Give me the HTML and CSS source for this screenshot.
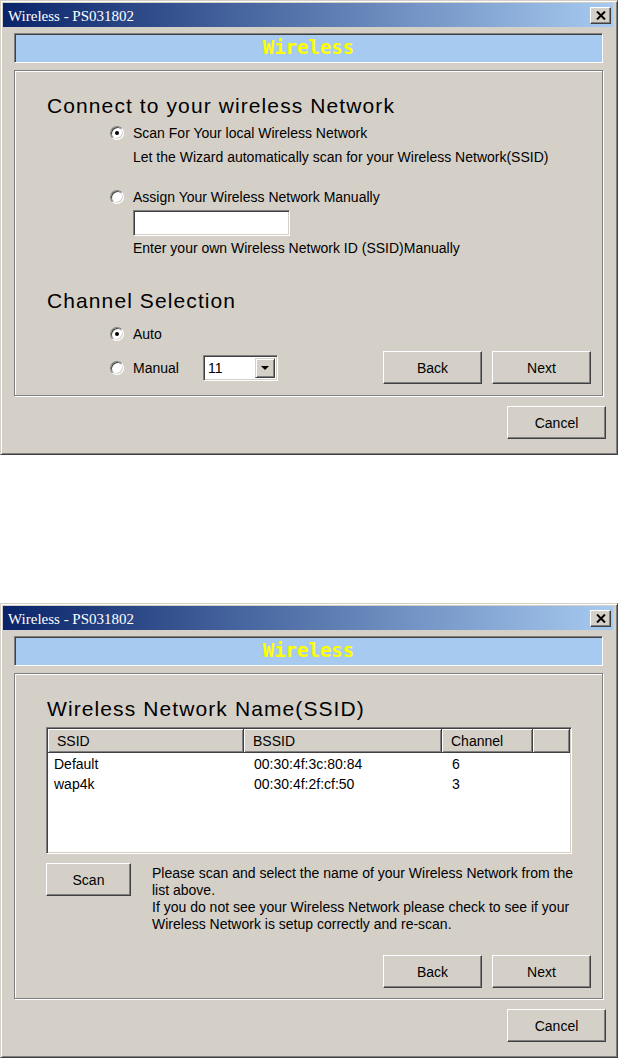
FILE: index.html
```html
<!DOCTYPE html>
<html>
<head>
<meta charset="utf-8">
<title>Wireless - PS031802</title>
<link rel="stylesheet" href="styles.css">
</head>
<body>
<div class="page">

  <div class="dialog">
    <div class="titlebar">
      <span class="title">Wireless - PS031802</span>
      <span class="close-btn"><svg width="10" height="9" viewBox="0 0 10 9"><path d="M1 0.5 L9 8.5 M9 0.5 L1 8.5" stroke="#000" stroke-width="2" fill="none"/></svg></span>
    </div>
    <div class="client">
      <div class="banner">Wireless</div>
      <div class="group">
        <h2 class="heading">Connect to your wireless Network</h2>
        <div class="options">
          <div class="radio-row first"><span class="radio checked"></span><span>Scan For Your local Wireless Network</span></div>
          <p class="hint">Let the Wizard automatically scan for your Wireless Network(SSID)</p>
          <div class="radio-row second"><span class="radio"></span><span>Assign Your Wireless Network Manually</span></div>
          <div class="textbox"></div>
          <p class="hint hint-tight">Enter your own Wireless Network ID (SSID)Manually</p>
        </div>
        <h2 class="heading channel">Channel Selection</h2>
        <div class="options">
          <div class="radio-row auto"><span class="radio checked"></span><span>Auto</span></div>
          <div class="manual-row">
            <div class="radio-row manual-choice"><span class="radio"></span><span>Manual</span></div>
            <div class="combo"><span class="combo-value">11</span><span class="combo-btn"><span class="arrow"></span></span></div>
            <div class="nav">
              <button class="btn">Back</button>
              <button class="btn">Next</button>
            </div>
          </div>
        </div>
      </div>
      <div class="footer"><button class="btn">Cancel</button></div>
    </div>
  </div>

  <div class="dialog">
    <div class="titlebar">
      <span class="title">Wireless - PS031802</span>
      <span class="close-btn"><svg width="10" height="9" viewBox="0 0 10 9"><path d="M1 0.5 L9 8.5 M9 0.5 L1 8.5" stroke="#000" stroke-width="2" fill="none"/></svg></span>
    </div>
    <div class="client">
      <div class="banner">Wireless</div>
      <div class="group">
        <h2 class="heading">Wireless Network Name(SSID)</h2>
        <div class="listview">
          <div class="lv-head">
            <span class="lv-hcell">SSID</span>
            <span class="lv-hcell">BSSID</span>
            <span class="lv-hcell">Channel</span>
            <span class="lv-hcell"></span>
          </div>
          <div class="lv-body">
            <div class="lv-row"><span class="lv-cell first">Default</span><span class="lv-cell">00:30:4f:3c:80:84</span><span class="lv-cell">6</span><span></span></div>
            <div class="lv-row"><span class="lv-cell first">wap4k</span><span class="lv-cell">00:30:4f:2f:cf:50</span><span class="lv-cell">3</span><span></span></div>
          </div>
        </div>
        <div class="scan-row">
          <button class="btn scan">Scan</button>
          <div class="scan-text">
            <p>Please scan and select the name of your Wireless Network from the<br>list above.</p>
            <p>If you do not see your Wireless Network please check to see if your<br>Wireless Network is setup correctly and re-scan.</p>
          </div>
        </div>
        <div class="nav nav-end">
          <button class="btn">Back</button>
          <button class="btn">Next</button>
        </div>
      </div>
      <div class="footer"><button class="btn">Cancel</button></div>
    </div>
  </div>

</div>
</body>
</html>
```
FILE: styles.css
```css
html, body {
  margin: 0;
  padding: 0;
  background: #fff;
}
body {
  font-family: "Liberation Sans", Arial, sans-serif;
  font-size: 14px;
  color: #000;
}
.page {
  display: flex;
  flex-direction: column;
  gap: 148px;
}
.dialog {
  width: 618px;
  height: 455px;
  box-sizing: border-box;
  background: #d4d0c8;
  border: 1px solid;
  border-color: #d4d0c8 #404040 #404040 #d4d0c8;
  box-shadow: inset 1px 1px #fff, inset -1px -1px #808080;
  padding: 2px 4px 2px 2px;
  display: flex;
  flex-direction: column;
}
.titlebar {
  height: 24px;
  flex: none;
  display: flex;
  align-items: center;
  justify-content: space-between;
  background: linear-gradient(to right, #0a246a, #a6caf0);
  padding: 0 2px 0 5px;
}
.title {
  color: #fff;
  font-family: "Liberation Serif", "Times New Roman", serif;
  font-size: 15px;
  line-height: 24px;
  padding-top: 1px;
  white-space: nowrap;
}
.close-btn {
  width: 21px;
  height: 17px;
  box-sizing: border-box;
  background: #d4d0c8;
  border: 1px solid;
  border-color: #fff #404040 #404040 #fff;
  box-shadow: inset -1px -1px #808080;
  display: flex;
  align-items: center;
  justify-content: center;
}
.client {
  flex: 1;
  display: flex;
  flex-direction: column;
  padding: 6px 10px 0 11px;
}
.banner {
  height: 30px;
  box-sizing: border-box;
  background: #a6caf0;
  border: 1px solid;
  border-color: #808080 #fff #fff #808080;
  box-shadow: inset 1px 1px #404040;
  color: #ffff00;
  font-family: "DejaVu Sans Mono", "Liberation Mono", monospace;
  font-weight: bold;
  font-size: 19px;
  line-height: 27px;
  text-align: center;
}
.group {
  margin-top: 7px;
  height: 326px;
  box-sizing: border-box;
  border: 1px solid #808080;
  box-shadow: inset 1px 1px #fff, 1px 1px #fff;
  padding: 23px 11px 10px 32px;
  display: flex;
  flex-direction: column;
}
.heading {
  margin: 0;
  font-size: 21px;
  line-height: 24px;
  font-weight: normal;
  letter-spacing: 1.1px;
  white-space: nowrap;
}
.heading.channel {
  margin-top: 33px;
}
.options {
  margin-left: 63px;
  display: flex;
  flex-direction: column;
}
.radio-row {
  display: flex;
  align-items: center;
  gap: 9px;
  line-height: 16px;
  white-space: nowrap;
}
.radio-row.first { margin-top: 7px; }
.radio-row.second { margin-top: 24px; }
.radio-row.auto { margin-top: 13px; }
.radio {
  position: relative;
  flex: none;
  width: 14px;
  height: 14px;
  box-sizing: border-box;
  border-radius: 50%;
  background: #fff;
  border: 1px solid;
  border-color: #808080 #fff #fff #808080;
  box-shadow: inset 1px 1px #404040, inset -1px -1px #d4d0c8;
}
.radio.checked::after {
  content: "";
  position: absolute;
  left: 50%;
  top: 50%;
  width: 4px;
  height: 4px;
  margin: -2px 0 0 -2px;
  border-radius: 50%;
  background: #000;
}
.hint {
  margin: 8px 0 0 23px;
  line-height: 16px;
  white-space: nowrap;
}
.hint.hint-tight {
  margin-top: 4px;
}
.textbox {
  margin: 5px 0 0 23px;
  width: 157px;
  height: 26px;
  box-sizing: border-box;
  background: #fff;
  border: 1px solid;
  border-color: #808080 #fff #fff #808080;
  box-shadow: inset 1px 1px #404040, inset -1px -1px #d4d0c8;
}
.manual-row {
  margin-top: 9px;
  height: 33px;
  display: flex;
  align-items: center;
}
.manual-choice {
  width: 93px;
}
.combo {
  width: 75px;
  height: 26px;
  box-sizing: border-box;
  background: #fff;
  border: 1px solid;
  border-color: #808080 #fff #fff #808080;
  box-shadow: inset 1px 1px #404040, inset -1px -1px #d4d0c8;
  padding: 2px 2px 2px 4px;
  display: flex;
  align-items: center;
  justify-content: space-between;
}
.combo-value {
  line-height: 16px;
}
.combo-btn {
  width: 20px;
  height: 20px;
  box-sizing: border-box;
  background: #d4d0c8;
  border: 1px solid;
  border-color: #d4d0c8 #404040 #404040 #d4d0c8;
  box-shadow: inset 1px 1px #fff, inset -1px -1px #808080;
  display: flex;
  align-items: center;
  justify-content: center;
}
.arrow {
  width: 0;
  height: 0;
  border-left: 4px solid transparent;
  border-right: 4px solid transparent;
  border-top: 4px solid #000;
  margin-top: 1px;
}
.nav {
  margin-left: auto;
  display: flex;
  gap: 10px;
}
.nav-end {
  margin-top: auto;
  align-self: flex-end;
}
.btn {
  width: 99px;
  height: 33px;
  box-sizing: border-box;
  margin: 0;
  padding: 0;
  background: #d4d0c8;
  border: 1px solid;
  border-color: #fff #404040 #404040 #fff;
  box-shadow: inset -1px -1px #808080;
  font-family: "Liberation Sans", Arial, sans-serif;
  font-size: 14px;
  color: #000;
  text-align: center;
}
.btn.scan {
  width: 85px;
}
.footer {
  display: flex;
  justify-content: flex-end;
  margin: 10px -3px 0 0;
}
.listview {
  margin: 6px 0 0 -1px;
  width: 526px;
  height: 127px;
  box-sizing: border-box;
  background: #fff;
  border: 1px solid;
  border-color: #808080 #fff #fff #808080;
  box-shadow: inset 1px 1px #404040, inset -1px -1px #d4d0c8;
  padding: 1px;
  display: flex;
  flex-direction: column;
}
.lv-head {
  display: grid;
  grid-template-columns: 196px 198px 91px 1fr;
  height: 24px;
}
.lv-hcell {
  box-sizing: border-box;
  background: #d4d0c8;
  box-shadow: inset 1px 1px #fff, inset -1px -1px #808080;
  border-right: 1px solid #404040;
  border-bottom: 1px solid #404040;
  padding: 1px 0 0 9px;
  line-height: 22px;
  white-space: nowrap;
}
.lv-body {
  padding-top: 1px;
}
.lv-row {
  display: grid;
  grid-template-columns: 196px 198px 91px 1fr;
  line-height: 20px;
}
.lv-cell {
  padding-left: 10px;
  white-space: nowrap;
}
.lv-cell.first {
  padding-left: 6px;
}
.scan-row {
  margin: 9px 0 0 -1px;
  display: flex;
  align-items: flex-start;
}
.scan-text {
  margin: 2px 0 0 21px;
  line-height: 17px;
  white-space: nowrap;
}
.scan-text p {
  margin: 0;
}
```
